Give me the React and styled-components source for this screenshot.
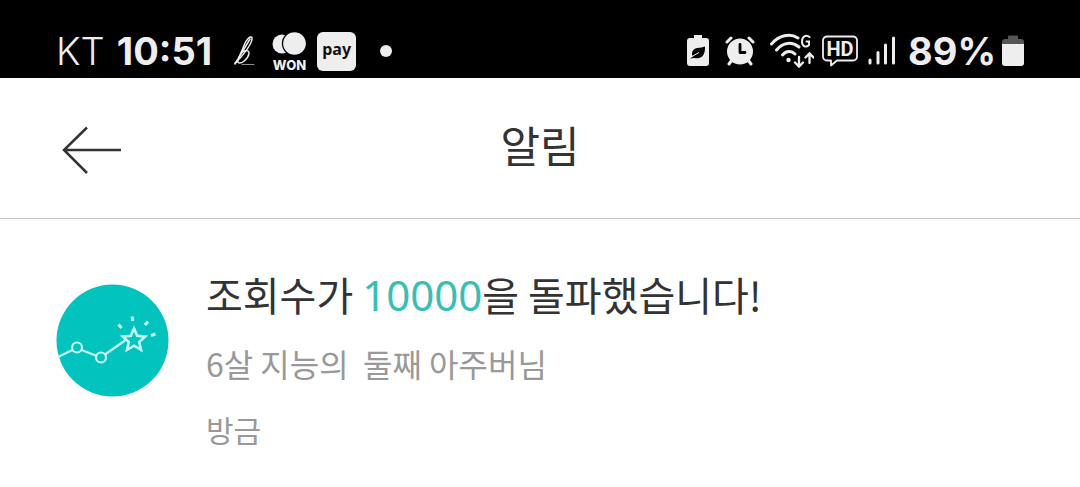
import React from 'react';
import styled, { createGlobalStyle } from 'styled-components';

const GlobalStyle = createGlobalStyle`
  * {
    box-sizing: border-box;
  }

  body {
    margin: 0;
    background-color: #fff;
    color: #333;
    font-family: 'Noto Sans CJK KR', 'Noto Sans', sans-serif;
  }
`;

const StatusBar = styled.div`
  display: flex;
  justify-content: space-between;
  align-items: flex-end;
  height: 78px;
  padding: 0 56px 4px;
  background-color: #000;
  color: #eee;
  font-family: Inter, sans-serif;
`;

const StatusGroup = styled.div`
  display: flex;
  align-items: center;
  height: 46px;
  gap: ${props => props.$gap}px;
`;

const Carrier = styled.span`
  font-size: 38px;
  font-weight: 300;
  line-height: 46px;
`;

const StatusValue = styled.span`
  font-size: 38px;
  font-weight: 700;
  line-height: 46px;
`;

const Icon = styled.svg`
  display: block;
  flex: none;
`;

const Header = styled.header`
  display: grid;
  grid-template-columns: 80px 1fr 80px;
  align-items: center;
  height: 141px;
  padding: 0 52px;
  border-bottom: 1px solid #ccc;
`;

const BackButton = styled.button`
  display: flex;
  justify-content: center;
  padding: 8px 0 4px;
  border: none;
  background: none;
  color: #333;
  cursor: pointer;
`;

const PageTitle = styled.h1`
  margin: 0;
  padding-bottom: 8px;
  font-size: 43px;
  font-weight: 400;
  line-height: 64px;
  text-align: center;
`;

const NotificationList = styled.ul`
  margin: 0;
  padding: 0;
  list-style: none;
`;

const Notification = styled.li`
  display: flex;
  gap: 37px;
  padding: 45px 56px 32px;
`;

const Avatar = styled(Icon)`
  margin-top: 20px;
`;

const Content = styled.div`
  flex: 1;
  min-width: 0;
`;

const Message = styled.h2`
  margin: 0;
  font-size: 40px;
  font-weight: 400;
  line-height: 60px;
`;

const Count = styled.span`
  color: #38bfb5;
  font-family: 'Noto Sans', sans-serif;
  font-size: 42px;
`;

const PostTitle = styled.p`
  margin: 12px 0 0;
  color: #999;
  font-size: 32px;
  line-height: 52px;
  white-space: pre-wrap;
`;

const Time = styled.time`
  display: block;
  margin-top: 16px;
  color: #999;
  font-size: 30px;
  line-height: 48px;
`;

const BandIcon = () => (
  <Icon width="38" height="32" viewBox="-10 0 38 32" fill="none" stroke="#eee" strokeLinecap="round">
    <path d="M1 28C8 22 19 8 18 2.500c-1.500-2-6 2-8 8C8 17 3 24 4 27.500c3 2 10-3 11-9 .5-3.500-4-4-8-.5" strokeWidth="1.500" />
    <path d="M1 29L16 4" strokeWidth="1.500" />
    <path d="M8 29.500h12" strokeWidth="1" opacity="0.6" />
  </Icon>
);

const WonIcon = () => (
  <Icon width="35" height="40" viewBox="0 0 35 40">
    <circle cx="10" cy="13" r="9.5" fill="#eee" />
    <circle cx="22.5" cy="12.5" r="12" fill="#eee" stroke="#000" strokeWidth="1.3" />
    <text x="17.5" y="38.5" fill="#eee" fontSize="13" fontWeight="800" textAnchor="middle">WON</text>
  </Icon>
);

const PayBadge = styled.span`
  width: 39px;
  height: 39px;
  border-radius: 6px;
  background-color: #eee;
  color: #111;
  font-family: 'Noto Sans', sans-serif;
  font-size: 16px;
  font-weight: 700;
  line-height: 34px;
  text-align: center;
`;

const Dot = styled.span`
  width: 12px;
  height: 12px;
  margin-left: 14px;
  border-radius: 50%;
  background-color: #eee;
`;

const PowerSavingIcon = () => (
  <Icon width="22" height="32" viewBox="0 0 22 32">
    <path d="M7 0h8v3h4a3 3 0 0 1 3 3v22a3 3 0 0 1-3 3H3a3 3 0 0 1-3-3V6a3 3 0 0 1 3-3h4z" fill="#eee" />
    <path d="M18 11.500c-4 2-12 0-13 6.500 0 1.500 0 2.500 1 3.500l-3 2 4.500-.5c6 1.500 11-2 10.500-11.500z" fill="#000" />
    <path d="M5 21.500l7-4" stroke="#eee" strokeWidth="1" />
  </Icon>
);

const AlarmIcon = () => (
  <Icon width="33" height="30" viewBox="0 0 33 30" fill="none" stroke="#eee" strokeLinecap="round">
    <circle cx="15" cy="15.5" r="13" fill="#eee" stroke="none" />
    <path d="M2 6l4-4M28 6l-4-4" strokeWidth="3" />
    <path d="M7 24l-3 4M23 24l3 4" strokeWidth="3" />
    <path d="M15 8.5v8h5" stroke="#000" strokeWidth="2.8" strokeLinejoin="round" />
  </Icon>
);

const WifiIcon = () => (
  <Icon width="44" height="36" viewBox="0 0 44 36" fill="none" stroke="#eee" strokeWidth="3" strokeLinecap="round">
    <path d="M1.5 11C9 2 20 0 28 5" />
    <path d="M6.5 17C13 9 22 8.5 29 14" />
    <path d="M12.5 22c4-4.5 9-4.5 12.5-1" />
    <circle cx="18.5" cy="27" r="2.2" fill="#eee" stroke="none" />
    <path d="M39.500 4c-3.500-3-7.500-.5-7.500 4.500s4 6.500 7 3.500V8.500h-2.500" strokeWidth="2" />
    <path d="M29 24v9M25 29.500l4 4 4-4M39.500 30v-9M35.500 24.500l4-4 4 4" strokeWidth="2.300" />
  </Icon>
);

const HdIcon = () => (
  <Icon width="38" height="32" viewBox="0 0 38 32">
    <path d="M5 1.5h26a4 4 0 0 1 4 4v16a4 4 0 0 1-4 4H15l-6 5v-5H5a4 4 0 0 1-4-4v-16a4 4 0 0 1 4-4z" fill="none" stroke="#eee" strokeWidth="1.8" strokeLinejoin="round" />
    <text x="18" y="20.5" fill="#eee" fontFamily="Roboto, sans-serif" fontSize="20" fontWeight="700" textAnchor="middle">HD</text>
  </Icon>
);

const SignalIcon = () => (
  <Icon width="28" height="30" viewBox="0 0 28 30" stroke="#eee" strokeLinecap="round" strokeWidth="3">
    <path d="M2 24v3M10 16.5v10.5M17.5 9v18M25.5 2v25" />
  </Icon>
);

const BatteryIcon = () => (
  <Icon width="22" height="32" viewBox="0 0 22 32">
    <path d="M6 1.5a1 1 0 0 1 1-1h8a1 1 0 0 1 1 1V4h3a3 3 0 0 1 3 3v3H0V7a3 3 0 0 1 3-3h3z" fill="#555" />
    <path d="M0 9h22v19a3 3 0 0 1-3 3H3a3 3 0 0 1-3-3z" fill="#eee" />
  </Icon>
);

const BackIcon = () => (
  <Icon width="60" height="50" viewBox="0 0 60 50" fill="none" stroke="currentColor" strokeWidth="2.5">
    <path d="M25 2.5L2 25l23 23M2 25h57" />
  </Icon>
);

const ViewsAvatar = () => (
  <Avatar width="113" height="113" viewBox="0 0 113 113" fill="none">
    <circle cx="56.5" cy="56.5" r="56" fill="#02c3bd" />
    <g stroke="#c5fbf6" strokeWidth="2.2">
      <path d="M2 73l14.5-7M25.5 66l15.5 6M49 70.5l20-14" />
      <circle cx="21" cy="63.5" r="5" />
      <circle cx="45" cy="73.5" r="5" />
      <path d="M78 44.5l3.2 7.3 8 .8-6 5.4 1.8 7.8-7-4.1-7 4.1 1.8-7.8-6-5.4 8-.8z" strokeWidth="2.6" />
      <path d="M62.5 40.5l3 3.5M76 32.5l.8 4.5M92 37.5l-3 3.5M99.5 50l-4.5 1.5" strokeWidth="3" />
    </g>
  </Avatar>
);

const App = () => {
  return (
    <>
      <GlobalStyle />
      <StatusBar>
        <StatusGroup $gap={12}>
          <Carrier>KT</Carrier>
          <StatusValue>10:51</StatusValue>
          <StatusGroup $gap={10}>
            <BandIcon />
            <WonIcon />
            <PayBadge>pay</PayBadge>
            <Dot />
          </StatusGroup>
        </StatusGroup>
        <StatusGroup $gap={12}>
          <StatusGroup $gap={16}>
            <PowerSavingIcon />
            <AlarmIcon />
          </StatusGroup>
          <StatusGroup $gap={8}>
            <WifiIcon />
            <HdIcon />
            <SignalIcon />
          </StatusGroup>
          <StatusGroup $gap={6}>
            <StatusValue>89%</StatusValue>
            <BatteryIcon />
          </StatusGroup>
        </StatusGroup>
      </StatusBar>
      <Header>
        <BackButton type="button" aria-label="뒤로">
          <BackIcon />
        </BackButton>
        <PageTitle>알림</PageTitle>
      </Header>
      <NotificationList>
        <Notification>
          <ViewsAvatar />
          <Content>
            <Message>
              조회수가 <Count>10000</Count>을 돌파했습니다!
            </Message>
            <PostTitle>{'6살 지능의  둘째 아주버님'}</PostTitle>
            <Time>방금</Time>
          </Content>
        </Notification>
      </NotificationList>
    </>
  );
};

export default App;
